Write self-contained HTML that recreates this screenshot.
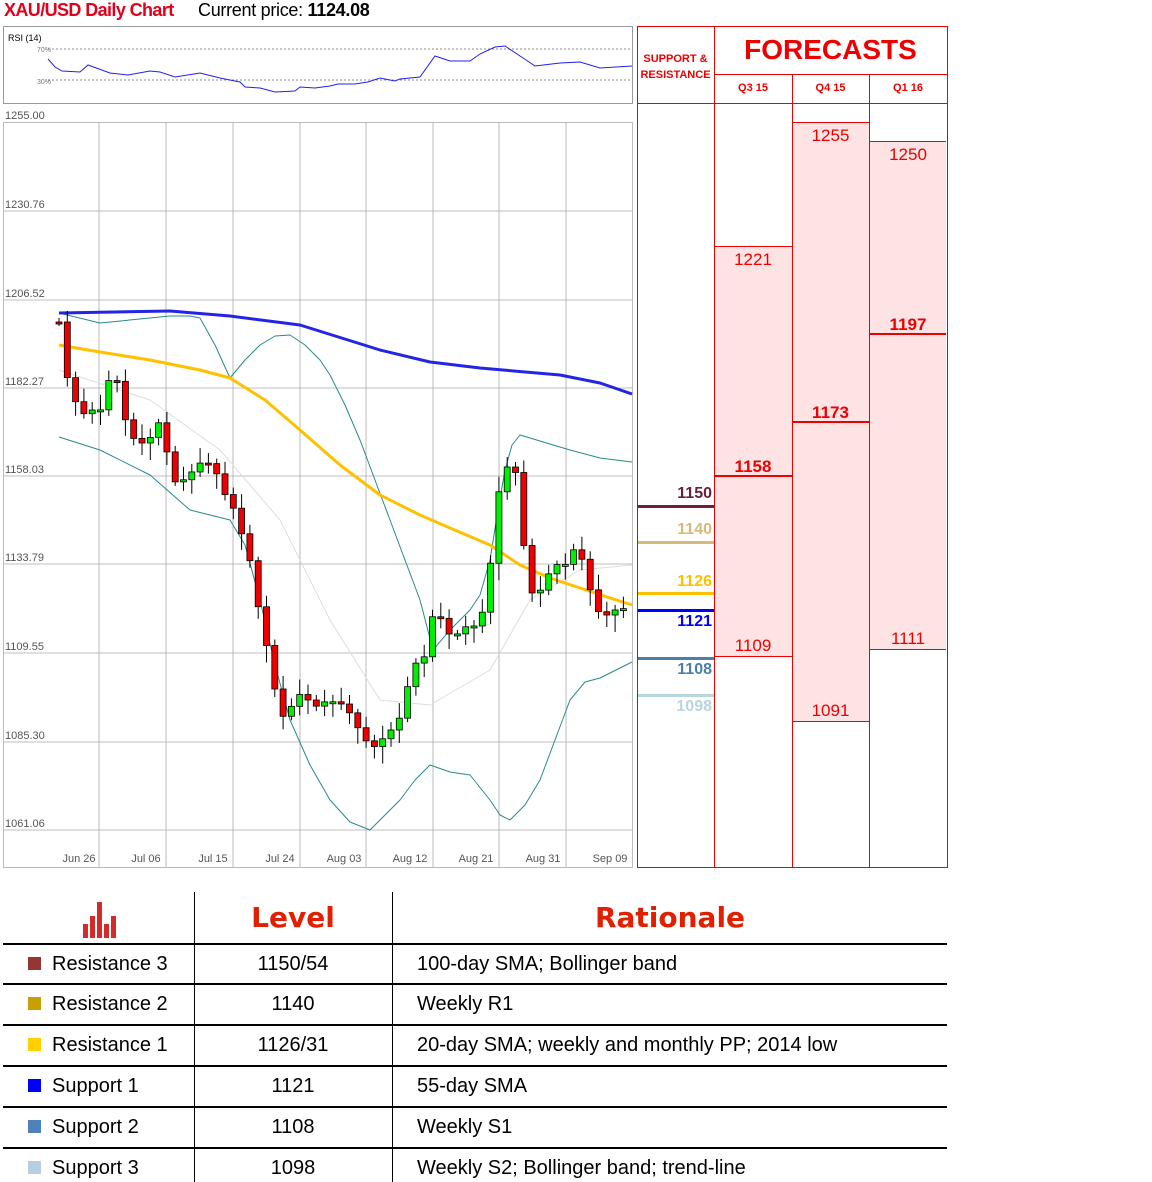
<!DOCTYPE html>
<html><head><meta charset="utf-8"><style>
body{margin:0;background:#fff;width:1152px;height:1182px;overflow:hidden;position:relative;font-family:"Liberation Sans",sans-serif}
.t{position:absolute;white-space:nowrap}
</style></head><body>
<div class="t" style="left:4px;top:0px;font-size:18px;color:#e3001b;font-weight:bold;letter-spacing:-0.6px">XAU/USD Daily Chart</div>
<div class="t" style="left:198px;top:0px;font-size:18px;color:#000;letter-spacing:-0.3px">Current price: <b>1124.08</b></div>
<svg id="s" width="1152" height="1182" style="position:absolute;left:0;top:0" xmlns="http://www.w3.org/2000/svg">
<rect x="3.5" y="26.5" width="629" height="77" fill="#fff" stroke="#999"/>
<text x="8" y="41" font-size="9" font-family="Liberation Sans">RSI (14)</text>
<text x="37" y="52" font-size="7" fill="#777" font-family="Liberation Sans">70%</text>
<text x="37" y="84" font-size="7" fill="#777" font-family="Liberation Sans">30%</text>
<line x1="48" y1="49" x2="632" y2="49" stroke="#666" stroke-dasharray="2,2" stroke-width="0.8"/>
<line x1="48" y1="80" x2="632" y2="80" stroke="#666" stroke-dasharray="2,2" stroke-width="0.8"/>
<polyline fill="none" stroke="#2020ee" stroke-width="1" points="48,59 55,67 62,71 80,72 88,65 110,73 128,75 150,71 160,72 175,77 200,73 220,78 240,82 245,87 260,88 275,92 295,91 300,87 315,88 330,86 338,84 355,84 368,82 380,78 390,80 395,81 400,79 420,77 435,56 450,61 470,61 480,54 495,47 505,46 520,56 535,66 560,63 580,62 600,68 632,66"/>
<rect x="3.5" y="122.5" width="629" height="745" fill="#fff" stroke="#bbb"/>
<g id="grid" stroke="#aaa" stroke-width="0.8"></g>
<g id="lines"></g>
<g id="candles"></g>
</svg>
<div id="labels"></div>
<div style="position:absolute;left:637px;top:26px;width:309px;height:840px;border:1px solid #ee0000;box-sizing:content-box"></div>
<div style="position:absolute;left:714px;top:26px;width:1px;height:841px;background:#e00"></div>
<div style="position:absolute;left:792px;top:74px;width:1px;height:793px;background:#e00"></div>
<div style="position:absolute;left:869px;top:74px;width:1px;height:793px;background:#e00"></div>
<div style="position:absolute;left:714px;top:74px;width:233px;height:1px;background:#e00"></div>
<div style="position:absolute;left:637px;top:103px;width:310px;height:1px;background:#e00"></div>
<div class="t" style="left:637px;top:51px;width:77px;text-align:center;font-size:11px;font-weight:bold;color:#e00;line-height:16px">SUPPORT &amp;<br>RESISTANCE</div>
<div class="t" style="left:714px;top:34px;width:233px;text-align:center;font-size:28px;font-weight:bold;color:#e00">FORECASTS</div>
<div class="t" style="left:714px;top:82px;width:78px;text-align:center;font-size:11px;font-weight:bold;color:#e00">Q3 15</div>
<div class="t" style="left:792px;top:82px;width:77px;text-align:center;font-size:11px;font-weight:bold;color:#e00">Q4 15</div>
<div class="t" style="left:869px;top:82px;width:78px;text-align:center;font-size:11px;font-weight:bold;color:#e00">Q1 16</div>
<div style="position:absolute;left:715px;top:246px;width:77px;height:409px;background:#fde3e3;border-top:1px solid #e00;border-bottom:1px solid #e00"></div>
<div style="position:absolute;left:715px;top:475px;width:77px;height:2px;background:#e00"></div>
<div style="position:absolute;left:793px;top:122px;width:76px;height:598px;background:#fde3e3;border-top:1px solid #e00;border-bottom:1px solid #e00"></div>
<div style="position:absolute;left:793px;top:421px;width:76px;height:2px;background:#e00"></div>
<div style="position:absolute;left:870px;top:141px;width:76px;height:507px;background:#fde3e3;border-top:1px solid #e00;border-bottom:1px solid #e00"></div>
<div style="position:absolute;left:870px;top:333px;width:76px;height:2px;background:#e00"></div>
<div class="t" style="left:714px;top:250px;width:78px;text-align:center;font-size:17px;color:#e00">1221</div>
<div class="t" style="left:714px;top:457px;width:78px;text-align:center;font-size:17px;color:#e00;font-weight:bold">1158</div>
<div class="t" style="left:714px;top:636px;width:78px;text-align:center;font-size:17px;color:#e00">1109</div>
<div class="t" style="left:792px;top:126px;width:77px;text-align:center;font-size:17px;color:#e00">1255</div>
<div class="t" style="left:792px;top:403px;width:77px;text-align:center;font-size:17px;color:#e00;font-weight:bold">1173</div>
<div class="t" style="left:792px;top:701px;width:77px;text-align:center;font-size:17px;color:#e00">1091</div>
<div class="t" style="left:869px;top:145px;width:78px;text-align:center;font-size:17px;color:#e00">1250</div>
<div class="t" style="left:869px;top:315px;width:78px;text-align:center;font-size:17px;color:#e00;font-weight:bold">1197</div>
<div class="t" style="left:869px;top:629px;width:78px;text-align:center;font-size:17px;color:#e00">1111</div>
<div id="sr"></div>
<div style="position:absolute;left:194px;top:892px;width:1px;height:290px;background:#000"></div>
<div style="position:absolute;left:392px;top:892px;width:1px;height:290px;background:#000"></div>
<div id="tbl"></div>
<svg style="position:absolute;left:82px;top:900px" width="38" height="38"><g fill="#d42a2a"><rect x="1" y="24" width="5" height="14"/><rect x="8" y="16" width="5" height="22"/><rect x="15" y="2" width="5" height="36"/><rect x="22" y="24" width="5" height="14"/><rect x="29" y="16" width="5" height="22"/></g></svg>
<div class="t" style="left:194px;top:901px;width:198px;text-align:center;font-size:28px;font-weight:bold;color:#e02000;font-family:'DejaVu Sans',sans-serif">Level</div>
<div class="t" style="left:392px;top:901px;width:556px;text-align:center;font-size:28px;font-weight:bold;color:#e02000;font-family:'DejaVu Sans',sans-serif">Rationale</div>
<script>
const NS="http://www.w3.org/2000/svg";
function el(p,t,a){const e=document.createElementNS(NS,t);for(const k in a)e.setAttribute(k,a[k]);p.appendChild(e);return e}
const g=document.getElementById('grid');
const ys=[211,300,388,476,564,653,742,830];
ys.forEach(y=>el(g,'line',{x1:4,y1:y,x2:632,y2:y}));
[99,166,233,300,366,433,499,566].forEach(x=>el(g,'line',{x1:x,y1:123,x2:x,y2:867}));
const L=document.getElementById('labels');let h='';
const pl=['1255.00','1230.76','1206.52','1182.27','1158.03','1133.79','1109.55','1085.30','1061.06'];
[122].concat(ys).forEach((y,i)=>{h+=`<div class="t" style="left:5px;top:${y-12}px;font-size:11px;color:#555">${pl[i]}</div>`});
const dl=['Jun 26','Jul 06','Jul 15','Jul 24','Aug 03','Aug 12','Aug 21','Aug 31','Sep 09'];
[79,146,213,280,344,410,476,543,610].forEach((x,i)=>{h+=`<div class="t" style="left:${x-20}px;width:40px;text-align:center;top:853px;font-size:11px;color:#555">${dl[i]}</div>`});
L.innerHTML=h;
const ln=document.getElementById('lines');
function pline(pts,c,w){el(ln,'polyline',{points:pts,fill:'none',stroke:c,'stroke-width':w,'stroke-linejoin':'round'})}
pline("59,370 150,400 220,450 280,520 330,620 380,700 430,705 490,670 530,600 580,570 632,565","#ddd",1);
pline("59,313 100,323 170,316 190,316 200,318 215,345 230,378 245,360 260,345 275,336 290,335 305,345 320,360 330,375 345,405 360,440 375,480 390,520 405,560 420,600 433,650 450,630 470,610 480,595 490,560 498,510 505,470 512,445 520,435 570,450 600,458 632,462","#2a8a8a",1);
pline("59,437 100,450 150,475 190,510 230,520 245,545 260,600 275,665 290,720 310,765 330,800 350,822 370,830 385,815 400,800 415,780 430,765 450,772 470,775 490,800 500,815 510,820 525,805 540,780 555,740 570,700 585,682 600,678 632,662","#2a8a8a",1);
pline("59,313 170,311 230,316 300,325 380,350 430,362 480,368 560,375 600,383 632,394","#2424e6",3);
pline("59,345 100,352 150,360 200,370 230,378 265,400 300,430 340,465 380,495 420,515 450,528 490,545 520,565 550,578 580,588 610,598 632,605","#ffc000",3);
const K=[[59,325],[66,375],[75,400],[85,412],[100,412],[108,378],[118,385],[125,420],[135,440],[150,440],[160,420],[175,485],[185,480],[200,460],[215,470],[235,515],[250,560],[265,640],[275,690],[285,720],[300,695],[320,705],[340,700],[355,725],[370,745],[385,740],[400,715],[415,665],[425,655],[435,600],[445,635],[465,630],[480,625],[490,565],[500,485],[510,460],[515,465],[520,520],[530,595],[540,590],[550,568],[565,565],[575,545],[585,570],[595,610],[605,612],[615,612],[625,608],[632,600]];
function interp(x){for(let i=1;i<K.length;i++){if(x<=K[i][0]){const a=K[i-1],b=K[i];return a[1]+(b[1]-a[1])*(x-a[0])/(b[0]-a[0])}}return K[K.length-1][1]}
const cg=document.getElementById('candles');
let prev=322;
for(let i=0;i<69;i++){const x=59+i*8.3;let c=interp(x)+((i*37)%7-3);let o=prev;
const hi=Math.min(o,c)-4-(i*7%12),lo=Math.max(o,c)+4+(i*5%14);
el(cg,'line',{x1:x,y1:hi,x2:x,y2:lo,stroke:'#000','stroke-width':1});
const up=c<o;let top=Math.min(o,c),ht=Math.max(Math.abs(o-c),2);
el(cg,'rect',{x:x-3,y:top,width:6,height:ht,fill:up?'#00ee00':'#ee0000',stroke:'#000','stroke-width':0.8});
prev=c;}
const S=document.getElementById('sr');let sh='';
[[1150,506,'#6b1f3a',-21],[1140,542,'#d9b97a',-21],[1126,593,'#ffc000',-20],[1121,610,'#0000ff',3],[1108,658,'#4a7fa8',3],[1098,695,'#b7d5dd',3]].forEach(r=>{
sh+=`<div style="position:absolute;left:638px;top:${r[1]-1}px;width:76px;height:3px;background:${r[2]}"></div><div class="t" style="left:638px;width:74px;text-align:right;top:${r[1]+r[3]}px;font-size:16px;font-weight:bold;color:${r[2]}">${r[0]}</div>`});
S.innerHTML=sh;
const rows=[['#943634','Resistance 3','1150/54','100-day SMA; Bollinger band'],['#c9a000','Resistance 2','1140','Weekly R1'],['#ffd000','Resistance 1','1126/31','20-day SMA; weekly and monthly PP; 2014 low'],['#0000ff','Support 1','1121','55-day SMA'],['#4f81bd','Support 2','1108','Weekly S1'],['#b8cce4','Support 3','1098','Weekly S2; Bollinger band; trend-line']];
let th='';const lines=[943,983,1024,1065,1106,1147];
lines.forEach(y=>th+=`<div style="position:absolute;left:3px;top:${y}px;width:944px;height:1.5px;background:#000"></div>`);
rows.forEach((r,i)=>{const y=lines[i];
th+=`<div style="position:absolute;left:28px;top:${y+14}px;width:13px;height:13px;background:${r[0]}"></div>
<div class="t" style="left:52px;top:${y+10}px;font-size:20px">${r[1]}</div>
<div class="t" style="left:194px;width:198px;text-align:center;top:${y+10}px;font-size:20px">${r[2]}</div>
<div class="t" style="left:417px;top:${y+10}px;font-size:20px">${r[3]}</div>`});
document.getElementById('tbl').innerHTML=th;
</script>
</body></html>
